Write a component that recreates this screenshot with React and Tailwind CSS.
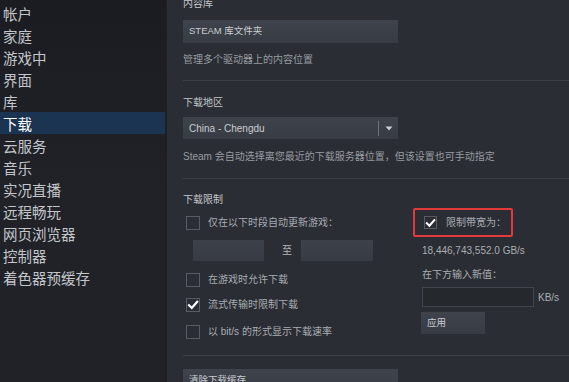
import React from 'react';

const FONT = { fontFamily: '"Liberation Sans", "Noto Sans CJK SC", sans-serif' };

const navItems = [
  '帐户', '家庭', '游戏中', '界面', '库', '下载', '云服务', '音乐',
  '实况直播', '远程畅玩', '网页浏览器', '控制器', '着色器预缓存',
];

function Check({ checked, size = 14 }) {
  return (
    <div
      className="shrink-0 border border-[#575b63] bg-[#2a2d33] flex items-center justify-center"
      style={{ width: size, height: size }}
    >
      {checked && (
        <svg width="12" height="12" viewBox="0 0 12 12">
          <path d="M2 6.2 L4.8 9 L10.2 2.8" fill="none" stroke="#ffffff" strokeWidth="2.2" strokeLinecap="square" />
        </svg>
      )}
    </div>
  );
}

function CheckRow({ checked, label, className = '' }) {
  return (
    <div className={`flex items-center h-[14px] pl-[3px] ${className}`}>
      <Check checked={checked} />
      <span className="ml-[8px] text-[10px] text-[#a7acb2] leading-[14px]">{label}</span>
    </div>
  );
}

function Divider({ className = '' }) {
  return <div className={`h-px bg-[#3c4047] ${className}`} />;
}

export default function App() {
  return (
    <div style={FONT} className="w-[569px] h-[382px] overflow-hidden flex bg-[#2a2d33]">
      {/* sidebar */}
      <div className="w-[165px] shrink-0 bg-linear-to-b from-[#1a1c21] via-[#202227] to-[#202227] pt-[2px]">
        {navItems.map((item) => (
          <div
            key={item}
            className={`h-[22px] pl-[3px] pt-[2px] leading-[22px] text-[14.5px] ${
              item === '下载' ? 'bg-[#1a3451] text-white' : 'text-[#c3c6cb]'
            }`}
          >
            {item}
          </div>
        ))}
      </div>
      <div className="w-[2px] shrink-0 bg-[#1d1f23]" />

      {/* content */}
      <div className="flex-1 pl-[16px] -mt-[3px]">
        <div className="h-[14px] leading-[14px] text-[10px] text-[#c3c7cc]">内容库</div>
        <div className="mt-[9px] w-[215px] h-[23px] bg-linear-to-b from-[#3f434c] to-[#373b43] flex items-center pl-[6px] text-[9.5px] text-[#c9ccd1]">
          STEAM 库文件夹
        </div>
        <div className="mt-[10px] h-[14px] leading-[14px] text-[10px] text-[#979ca2]">管理多个驱动器上的内容位置</div>
        <Divider className="mt-[13px]" />

        <div className="mt-[15px] h-[14px] leading-[14px] text-[10px] text-[#c3c7cc]">下载地区</div>
        <div className="mt-[7px] w-[215px] h-[22px] bg-linear-to-b from-[#3f434c] to-[#373b43] flex items-center">
          <span className="flex-1 pl-[6px] text-[10px] text-[#c9ccd1]">China - Chengdu</span>
          <div className="w-px h-[15px] bg-[#6b7079]" />
          <div className="w-[19px] flex justify-center">
            <svg width="8" height="5" viewBox="0 0 8 5">
              <path d="M0.5 0.5 H7.5 L4 4.5 Z" fill="#c9ccd1" />
            </svg>
          </div>
        </div>
        <div className="mt-[11px] h-[14px] leading-[14px] text-[10px] text-[#979ca2]">
          Steam 会自动选择离您最近的下载服务器位置，但该设置也可手动指定
        </div>
        <Divider className="mt-[14px]" />

        <div className="mt-[14px] h-[14px] leading-[14px] text-[10px] text-[#c3c7cc]">下载限制</div>
        <div className="flex items-start">
          <div className="w-[230px] shrink-0 pt-[9px]">
            <CheckRow label="仅在以下时段自动更新游戏：" />
            <div className="mt-[10px] ml-[10px] flex items-center">
              <div className="w-[71px] h-[21px] bg-linear-to-b from-[#3d414a] to-[#373b43]" />
              <span className="ml-[18px] w-[10px] text-[10px] text-[#b3b7bc]">至</span>
              <div className="ml-[9px] w-[72px] h-[21px] bg-linear-to-b from-[#3d414a] to-[#373b43]" />
            </div>
            <CheckRow label="在游戏时允许下载" className="mt-[12px]" />
            <CheckRow checked label="流式传输时限制下载" className="mt-[11px]" />
            <CheckRow label="以 bit/s 的形式显示下载速率" className="mt-[13px]" />
          </div>
          <div className="pt-[1px]">
            <div className="w-[100px] h-[29px] border-2 border-[#e3393b] rounded-[2px] flex items-center pl-[9px]">
              <Check checked size={13} />
              <span className="ml-[9px] text-[10px] text-[#a7acb2]">限制带宽为：</span>
            </div>
            <div className="mt-[7px] ml-[9px] h-[14px] leading-[14px] text-[10px] text-[#a9adb2]">18,446,743,552.0 GB/s</div>
            <div className="mt-[10px] ml-[9px] h-[14px] leading-[14px] text-[10px] text-[#a9adb2]">在下方输入新值：</div>
            <div className="mt-[5px] ml-[9px] flex items-center">
              <div className="w-[112px] h-[20px] border border-[#41454d] bg-[#25282d]" />
              <span className="ml-[4px] text-[10px] text-[#a9adb2]">KB/s</span>
            </div>
            <div className="mt-[5px] ml-[8px] w-[64px] h-[22px] bg-linear-to-b from-[#3f434c] to-[#373b43] flex items-center pl-[6px] text-[9.5px] text-[#c9ccd1]">
              应用
            </div>
          </div>
        </div>
        <Divider className="mt-[16px]" />
        <div className="mt-[13px] w-[215px] h-[23px] bg-linear-to-b from-[#3f434c] to-[#373b43] flex items-center pl-[6px] text-[9.5px] text-[#c9ccd1]">
          清除下载缓存
        </div>
      </div>
    </div>
  );
}
